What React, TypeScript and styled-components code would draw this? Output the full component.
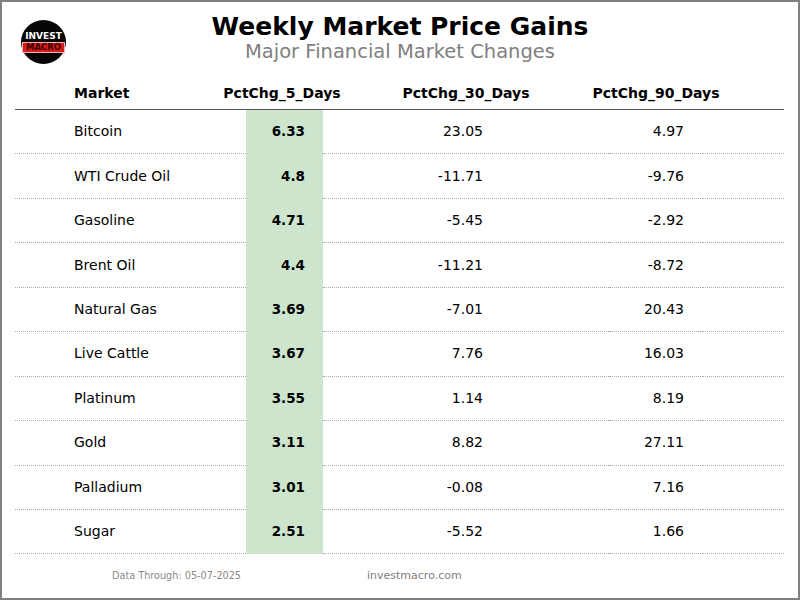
import { FC } from "react";
import styled, { createGlobalStyle } from "styled-components";

const rows = [
    { market: 'Bitcoin', d5: '6.33', d30: '23.05', d90: '4.97' },
    { market: 'WTI Crude Oil', d5: '4.8', d30: '-11.71', d90: '-9.76' },
    { market: 'Gasoline', d5: '4.71', d30: '-5.45', d90: '-2.92' },
    { market: 'Brent Oil', d5: '4.4', d30: '-11.21', d90: '-8.72' },
    { market: 'Natural Gas', d5: '3.69', d30: '-7.01', d90: '20.43' },
    { market: 'Live Cattle', d5: '3.67', d30: '7.76', d90: '16.03' },
    { market: 'Platinum', d5: '3.55', d30: '1.14', d90: '8.19' },
    { market: 'Gold', d5: '3.11', d30: '8.82', d90: '27.11' },
    { market: 'Palladium', d5: '3.01', d30: '-0.08', d90: '7.16' },
    { market: 'Sugar', d5: '2.51', d30: '-5.52', d90: '1.66' },
];

const App: FC = () => {
    return <>
        <GlobalStyle />
        <Frame>
            <Header>
                <Logo>
                    <LogoTop>INVEST</LogoTop>
                    <LogoBottom>MACRO</LogoBottom>
                </Logo>
                <Titles>
                    <Title>Weekly Market Price Gains</Title>
                    <Subtitle>Major Financial Market Changes</Subtitle>
                </Titles>
                <div />
            </Header>
            <Table>
                <HeadRow>
                    <HeadCell $align="left">Market</HeadCell>
                    <HeadCell $shift={5}>PctChg_5_Days</HeadCell>
                    <HeadCell>PctChg_30_Days</HeadCell>
                    <HeadCell>PctChg_90_Days</HeadCell>
                    <HeadCell />
                </HeadRow>
                {rows.map((r) => <Row key={r.market}>
                    <Cell $align="left">{r.market}</Cell>
                    <GreenCell>{r.d5}</GreenCell>
                    <Cell $pad={126}>{r.d30}</Cell>
                    <Cell $pad={19}>{r.d90}</Cell>
                    <Cell />
                </Row>)}
            </Table>
            <Footer>
                <DateNote>Data Through: 05-07-2025</DateNote>
                <Site>investmacro.com</Site>
            </Footer>
        </Frame>
    </>
}

const GlobalStyle = createGlobalStyle`
    body {
        margin: 0;
        background: #FFFFFF;
        font-family: 'DejaVu Sans', 'Liberation Sans', sans-serif;
    }
`

const Frame = styled.div`
    box-sizing: border-box;
    width: 800px;
    height: 600px;
    border: 2px solid #808080;
    background: #FFFFFF;
    display: flex;
    flex-direction: column;
`

const Header = styled.div`
    display: grid;
    grid-template-columns: 1fr auto 1fr;
    align-items: center;
    height: 75px;
    padding-bottom: 4px;
    box-sizing: border-box;
`

const Logo = styled.div`
    width: 45px;
    height: 44px;
    margin-left: 19px;
    margin-top: 9px;
    border-radius: 50%;
    background: #050505;
    display: flex;
    flex-direction: column;
    align-items: center;
    justify-content: center;
    gap: 1px;
`

const LogoTop = styled.div`
    font-family: 'DejaVu Sans', sans-serif;
    font-weight: 700;
    font-size: 9px;
    line-height: 9px;
    color: #FFFFFF;
`

const LogoBottom = styled.div`
    font-family: 'DejaVu Sans', sans-serif;
    font-weight: 700;
    font-size: 8.5px;
    line-height: 9px;
    color: #3a0000;
    background: #d41c1c;
    padding: 0 3px;
    border: 0.5px solid #f2b0b0;
`

const Titles = styled.div`
    display: flex;
    flex-direction: column;
    align-items: center;
    margin-top: 1px;
`

const Title = styled.div`
    font-weight: 700;
    font-size: 25px;
    line-height: 28px;
    color: #000000;
`

const Subtitle = styled.div`
    font-size: 19.5px;
    line-height: 22px;
    color: #808080;
`

const Table = styled.div`
    margin: 0 14px 0 13px;
    display: flex;
    flex-direction: column;
`

const HeadRow = styled.div`
    display: grid;
    grid-template-columns: 231px 77px 286px 94px 1fr;
    height: 32px;
    border-bottom: 1px solid #555555;
`

const HeadCell = styled.div<{ $align?: 'left', $shift?: number }>`
    display: flex;
    align-items: center;
    justify-content: ${p => p.$align === 'left' ? 'flex-start' : 'center'};
    padding-left: ${p => p.$align === 'left' ? '59px' : '0'};
    padding-right: ${p => p.$shift ?? 0}px;
    white-space: nowrap;
    font-weight: 700;
    font-size: 14px;
    color: #000000;
`

const Row = styled.div`
    display: grid;
    grid-template-columns: 231px 77px 286px 94px 1fr;
    height: 44.44px;
`

const Cell = styled.div<{ $align?: 'left', $pad?: number }>`
    box-sizing: border-box;
    display: flex;
    align-items: center;
    justify-content: ${p => p.$align === 'left' ? 'flex-start' : 'flex-end'};
    padding-left: ${p => p.$align === 'left' ? '59px' : '0'};
    padding-right: ${p => p.$pad ?? 0}px;
    padding-bottom: 1px;
    border-bottom: 1px dotted #a8a8a8;
    font-size: 14px;
    color: #000000;
`

const GreenCell = styled(Cell)`
    justify-content: flex-end;
    padding-right: 18px;
    background: #cde5cd;
    border-bottom-color: #cde5cd;
    font-weight: 700;
    font-size: 13.5px;
`

const Footer = styled.div`
    flex: 1;
    display: flex;
    align-items: center;
    padding-left: 110px;
    padding-bottom: 2px;
`

const DateNote = styled.div`
    width: 255px;
    font-size: 9.7px;
    color: #888888;
`

const Site = styled.div`
    font-size: 11px;
    color: #808080;
`

export default App;
